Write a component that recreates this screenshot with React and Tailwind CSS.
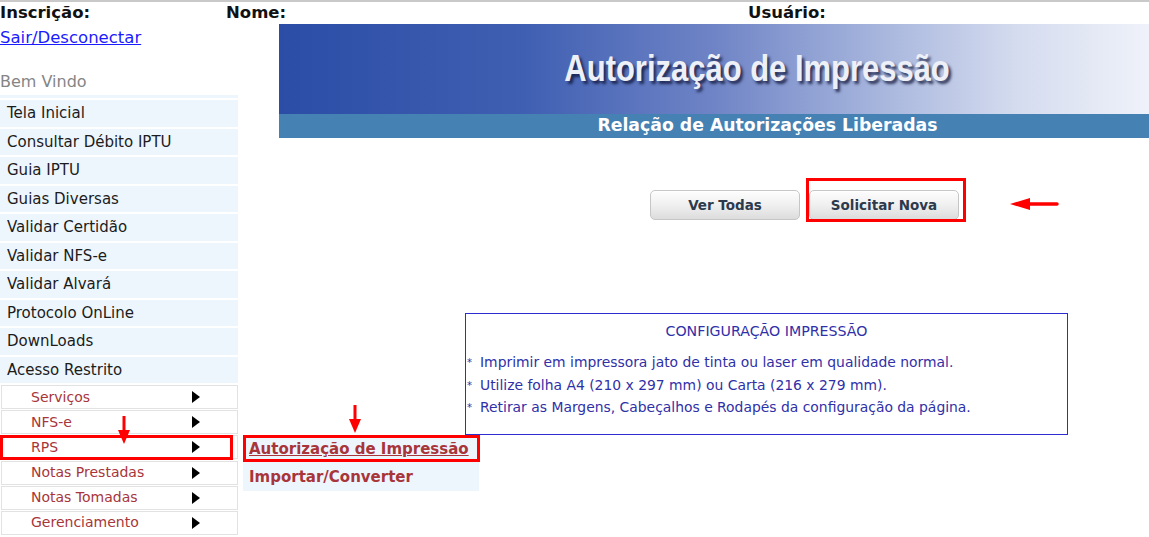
import React from "react";

const mainMenu = [
  "Tela Inicial",
  "Consultar Débito IPTU",
  "Guia IPTU",
  "Guias Diversas",
  "Validar Certidão",
  "Validar NFS-e",
  "Validar Alvará",
  "Protocolo OnLine",
  "DownLoads",
  "Acesso Restrito",
];

const subMenu = ["Serviços", "NFS-e", "RPS", "Notas Prestadas", "Notas Tomadas", "Gerenciamento"];

const tips = [
  "Imprimir em impressora jato de tinta ou laser em qualidade normal.",
  "Utilize folha A4 (210 x 297 mm) ou Carta (216 x 279 mm).",
  "Retirar as Margens, Cabeçalhos e Rodapés da configuração da página.",
];

function DownArrow({ className }) {
  return (
    <svg className={className} width="16" height="30" viewBox="0 0 16 30">
      <path d="M8 0 V16" stroke="#f00" strokeWidth="3" />
      <path d="M2 14 L14 14 L8 28 Z" fill="#f00" />
    </svg>
  );
}

function Button({ children }) {
  return (
    <button className="w-[150px] h-[30px] rounded-[5px] border border-[#c6c6c6] bg-gradient-to-b from-[#fdfdfd] via-[#f0f0f0] to-[#dcdcdc] text-[13.5px] font-bold text-[#2c3a4e] shadow-[inset_0_1px_0_#fff]">
      {children}
    </button>
  );
}

export default function App() {
  return (
    <div
      className="relative w-[1149px] h-[537px] overflow-hidden bg-white text-[#1c1c1c]"
      style={{ fontFamily: '"DejaVu Sans", Verdana, sans-serif' }}
    >
      <div className="h-[2px] bg-[#c9c9c9]" />

      {/* header */}
      <div className="flex h-[22px] items-center text-[16.5px] font-bold text-[#111]">
        <span className="w-[226px]">Inscrição:</span>
        <span className="w-[522px]">Nome:</span>
        <span>Usuário:</span>
      </div>

      <div className="flex">
        {/* sidebar */}
        <aside className="w-[238px] shrink-0">
          <a href="#" className="mt-[5px] block leading-[18px] text-[16.5px] text-[#1b1bff] underline">
            Sair/Desconectar
          </a>
          <div className="mt-[26px] leading-[18px] text-[16px] text-[#858585]">Bem Vindo</div>
          <div className="mt-[4px] h-[3px] bg-[#eef6fd]" />
          <ul className="mt-[2px] flex flex-col gap-[2px]">
            {mainMenu.map((m) => (
              <li key={m} className="h-[26.5px] flex items-center pl-[7px] bg-[#eef6fd] text-[15px]">
                {m}
              </li>
            ))}
          </ul>
          <ul className="mt-[2px] ml-[1px] flex flex-col gap-[1.2px]">
            {subMenu.map((m) => (
              <li
                key={m}
                className="box-border h-[24px] flex items-center justify-between pl-[29px] pr-[37px] border border-[#e2e2e2] bg-white text-[14px] text-[#a8353a]"
              >
                <span>{m}</span>
                <span className="w-0 h-0 border-l-[8px] border-l-black border-y-[6px] border-y-transparent" />
              </li>
            ))}
          </ul>
        </aside>

        {/* content */}
        <main className="ml-[41px] flex-1">
          <div className="h-[90px] flex items-center justify-center pl-[86px] bg-[linear-gradient(to_right,#2c4da6_0%,#3f5fb2_28%,#6f84c6_50%,#aab8de_70%,#d5dcef_85%,#eff2f9_100%)]">
            <h1
              className="inline-block scale-x-[0.86] text-[36px] font-bold text-[#eef0f7] [text-shadow:3px_3px_3px_rgba(10,15,50,0.75)]"
              style={{ fontFamily: '"Liberation Sans", Arial, sans-serif' }}
            >
              Autorização de Impressão
            </h1>
          </div>
          <div className="h-[24px] flex items-center justify-center pl-[107px] bg-[#4581b3] text-[17.3px] font-bold text-white">
            Relação de Autorizações Liberadas
          </div>

          <div className="mt-[52px] ml-[371px] flex gap-[9px]">
            <Button>Ver Todas</Button>
            <Button>Solicitar Nova</Button>
          </div>

          <div className="mt-[93px] ml-[186px] w-[603px] h-[122px] border-[1.5px] border-[#2d2dd0] text-[13.9px] text-[#3030a8]">
            <div className="mt-[8px] leading-[19px] text-center text-[14.2px]">CONFIGURAÇÃO IMPRESSÃO</div>
            <div className="mt-[12px] flex flex-col gap-[3.5px]">
              {tips.map((t) => (
                <div key={t} className="leading-[19px] pl-[1px]">
                  <span className="text-[10px] align-top mr-[8px]">*</span>
                  {t}
                </div>
              ))}
            </div>
          </div>
        </main>
      </div>

      {/* RPS flyout menu */}
      <div className="absolute left-[243px] top-[435px] w-[236px] h-[56px] bg-[#eef6fd] flex flex-col text-[15px] font-bold text-[#a8353a]">
        <a href="#" className="h-[28px] flex items-center pl-[6px] underline">Autorização de Impressão</a>
        <span className="h-[28px] flex items-center pl-[6px]">Importar/Converter</span>
      </div>

      {/* annotations */}
      <div className="absolute left-0 top-[435px] w-[233px] h-[25px] border-[3px] border-[#f00]" />
      <div className="absolute left-[243px] top-[435px] w-[237px] h-[27px] border-[3px] border-[#f00]" />
      <div className="absolute left-[806px] top-[178px] w-[160px] h-[44px] border-[3px] border-[#f00]" />
      <DownArrow className="absolute left-[116px] top-[416px]" />
      <DownArrow className="absolute left-[347px] top-[405px]" />
      <svg className="absolute left-[1008px] top-[197px]" width="52" height="14" viewBox="0 0 52 14">
        <path d="M18 7 H49" stroke="#f00" strokeWidth="3.5" strokeLinecap="round" />
        <path d="M2 7 L22 1 L22 13 Z" fill="#f00" />
      </svg>
    </div>
  );
}
